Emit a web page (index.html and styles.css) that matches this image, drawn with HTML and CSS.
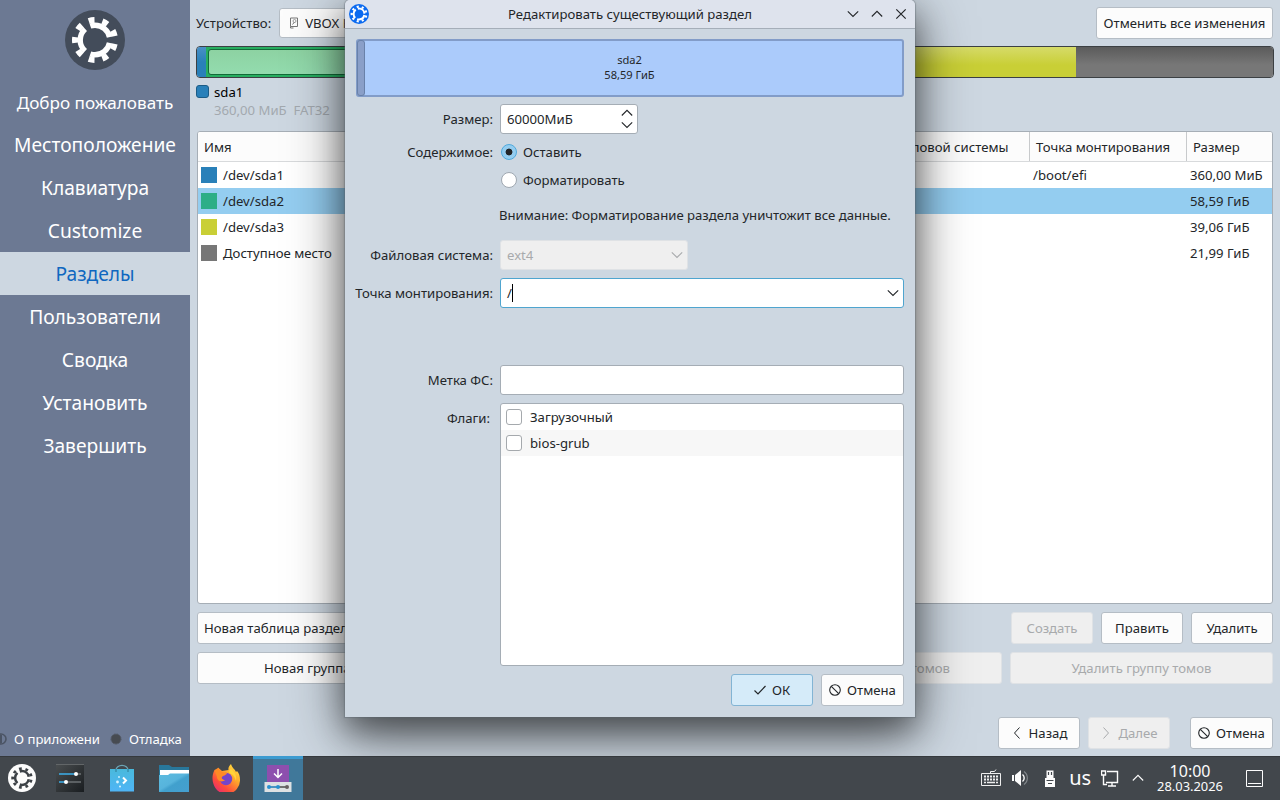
FILE: index.html
```html
<!DOCTYPE html>
<html lang="ru">
<head>
  <meta charset="UTF-8" />
  <title>Редактировать существующий раздел</title>
  <link rel="stylesheet" href="styles.css">
</head>
<body>
  <svg class="defs">
    <symbol id="gear" viewBox="-30 -30 60 60">
      <circle r="14.8" fill="none" stroke="currentColor" stroke-width="5.4" pathLength="36" stroke-dasharray="9.7 2.3" stroke-dashoffset="-1.15" />
      <circle r="20" fill="none" stroke="currentColor" stroke-width="6" pathLength="36" stroke-dasharray="1.7 2.3" stroke-dashoffset="-1.15" />
    </symbol>
    <symbol id="down" viewBox="0 0 12 12"><path d="M.8 3.3 6 8.5 11.2 3.3" fill="none" stroke="currentColor" stroke-width="1.1" /></symbol>
    <symbol id="up" viewBox="0 0 12 12"><path d="M.8 8.5 6 3.3 11.2 8.5" fill="none" stroke="currentColor" stroke-width="1.1" /></symbol>
    <symbol id="cancel" viewBox="0 0 12 12"><g fill="none" stroke="currentColor" stroke-width="1.1"><circle cx="6" cy="6" r="5.3" /><path d="M2.3 2.3 9.7 9.7" /></g></symbol>
  </svg>

  <div class="app">
    <aside class="sidebar">
      <div class="logo"><svg><use href="#gear" /></svg></div>
      <ul class="steps">
        <li class="small">Добро пожаловать</li>
        <li>Местоположение</li>
        <li>Клавиатура</li>
        <li>Customize</li>
        <li class="active">Разделы</li>
        <li>Пользователи</li>
        <li>Сводка</li>
        <li>Установить</li>
        <li>Завершить</li>
      </ul>
      <div class="about">
        <svg class="about-icon" viewBox="0 0 12 12"><circle cx="6" cy="6" r="5" fill="none" stroke="#4b5464" stroke-width="1.6" /><path d="M5.500 2v8" stroke="#4b5464" stroke-width="3" /></svg>
        <span>О приложени</span>
        <svg class="debug-icon" viewBox="0 0 12 12"><circle cx="6" cy="6" r="4.800" fill="#474b51" /><circle cx="6" cy="6" r="5" fill="none" stroke="#4b4f57" stroke-dasharray="1 .6" stroke-width="1" /></svg>
        <span>Отладка</span>
      </div>
    </aside>

    <main class="main">
      <div class="device">
        <span>Устройство:</span>
        <div class="combo">
          <svg class="disk" viewBox="0 0 10 12"><path d="M1.500 1h7v8.500h-7zM1.500 9.500v1.500h3M3.500 7.500l2-2.500" fill="none" stroke="#777" /><circle cx="5.500" cy="4" r="1.500" fill="none" stroke="#888" stroke-width=".8" /></svg>
          <span>VBOX HARDDISK</span>
        </div>
        <button class="revert">Отменить все изменения</button>
      </div>

      <div class="partbar">
        <div class="part p1"></div>
        <div class="part p2"><div class="inner"></div></div>
        <div class="part p3"></div>
        <div class="part p4"></div>
      </div>
      <div class="legend">
        <i></i>
        <div>
          <div class="legend-name">sda1</div>
          <div class="legend-size">360,00 МиБ&nbsp; FAT32</div>
        </div>
      </div>

      <div class="table">
        <div class="row head"><span>Имя</span><span>Файловая система</span><span>Метка файловой системы</span><span>Точка монтирования</span><span>Размер</span></div>
        <div class="row"><span><i class="c1"></i>/dev/sda1</span><span></span><span></span><span>/boot/efi</span><span>360,00 МиБ</span></div>
        <div class="row selected"><span><i class="c2"></i>/dev/sda2</span><span></span><span></span><span></span><span>58,59 ГиБ</span></div>
        <div class="row"><span><i class="c3"></i>/dev/sda3</span><span></span><span></span><span></span><span>39,06 ГиБ</span></div>
        <div class="row"><span><i class="c4"></i>Доступное место</span><span></span><span></span><span></span><span>21,99 ГиБ</span></div>
      </div>

      <div class="actions">
        <button class="new-table">Новая таблица разделов</button>
        <button class="fixed push" disabled>Создать</button>
        <button class="fixed">Править</button>
        <button class="fixed">Удалить</button>
      </div>
      <div class="volumes">
        <button>Новая группа томов</button>
        <button disabled>Изменить группу томов</button>
        <button disabled>Отключить группу томов</button>
        <button disabled>Удалить группу томов</button>
      </div>
      <div class="nav">
        <button class="fixed"><svg viewBox="0 0 12 12"><path d="M8.500.5 3.500 6l5 5.500" fill="none" stroke="currentColor" /></svg>Назад</button>
        <button class="fixed" disabled><svg viewBox="0 0 12 12"><path d="M3.500.5 8.500 6l-5 5.500" fill="none" stroke="currentColor" /></svg>Далее</button>
        <button class="cancel"><svg><use href="#cancel" /></svg>Отмена</button>
      </div>
    </main>
  </div>

  <div class="dialog">
    <div class="titlebar">
      <div class="title-icon"><svg><use href="#gear" /></svg></div>
      <div class="title">Редактировать существующий раздел</div>
      <svg><use href="#down" /></svg>
      <svg><use href="#up" /></svg>
      <svg viewBox="0 0 12 12"><path d="M1.300 1.300 10.700 10.700M10.700 1.300 1.300 10.700" stroke="currentColor" stroke-width="1.200" /></svg>
    </div>
    <div class="resizer">
      <div class="grip"></div>
      <div class="resizer-text">sda2<br>58,59 ГиБ</div>
    </div>
    <div class="form">
      <label>Размер:</label>
      <div class="field spin"><span>60000МиБ</span><div class="arrows"><svg><use href="#up" /></svg><svg><use href="#down" /></svg></div></div>
      <label>Содержимое:</label>
      <div class="radio"><i class="on"></i>Оставить</div>
      <span></span>
      <div class="radio"><i></i>Форматировать</div>
      <span></span>
      <div class="warning">Внимание: Форматирование раздела уничтожит все данные.</div>
      <label>Файловая система:</label>
      <div class="field disabled"><span>ext4</span><svg><use href="#down" /></svg></div>
      <label>Точка монтирования:</label>
      <div class="field focus"><span class="typed">/</span><svg><use href="#down" /></svg></div>
      <label class="fs-label">Метка ФС:</label>
      <div class="field fs-label"></div>
      <label class="flags-label">Флаги:</label>
      <div class="flags">
        <div><i></i>Загрузочный</div>
        <div><i></i>bios-grub</div>
      </div>
    </div>
    <div class="buttons">
      <button class="fixed ok"><svg viewBox="0 0 12 12"><path d="M.5 6.500 4 10 11.500 2" fill="none" stroke="currentColor" stroke-width="1.200" /></svg>ОК</button>
      <button class="cancel"><svg><use href="#cancel" /></svg>Отмена</button>
    </div>
  </div>

  <footer class="taskbar">
    <div class="task"><div class="launcher"><svg><use href="#gear" /></svg></div></div>
    <div class="task">
      <svg viewBox="0 0 28 28"><defs><linearGradient id="dark" x2="1" y2="1"><stop stop-color="#4a4e50" /><stop offset="1" stop-color="#191d20" /></linearGradient></defs><path fill="url(#dark)" d="M0 0h28v28H0z" /><path d="M0 .5h28" stroke="#626668" /><path d="M3 10h17M3 18h7" stroke="#3daee9" stroke-width="1.500" /><path d="M10 18h15M20 10h5" stroke="#6c7174" stroke-width="1.500" /><circle cx="20" cy="10" r="2" fill="#fff" /><circle cx="10" cy="18" r="2" fill="#fff" /></svg>
    </div>
    <div class="task">
      <svg viewBox="0 0 28 28"><defs><linearGradient id="bag" x2="0" y2="1"><stop stop-color="#49b9dc" /><stop offset="1" stop-color="#4fb5f6" /></linearGradient></defs><path d="M8 8V6a6 4.700 0 0 1 12 0v2" fill="none" stroke="#6ba5b5" stroke-width="1.300" /><path d="M2 5h24v22.500H2z" fill="url(#bag)" /><path d="M8 8V5M20 8V5" stroke="#3589a7" stroke-width="1.300" /><path d="m15 13.500 3 3-3 3" fill="none" stroke="#fff" stroke-width="2" /><g fill="#d8f3ff"><circle cx="11" cy="13" r=".9" /><circle cx="9.500" cy="18" r="1.400" /><circle cx="12" cy="22.500" r="1" /></g></svg>
    </div>
    <div class="task">
      <svg class="wide" viewBox="0 0 30 28"><defs><linearGradient id="fold" x2="1" y2="1"><stop stop-color="#5dbce0" /><stop offset=".45" stop-color="#57b4dc" /><stop offset=".55" stop-color="#41a0cd" /><stop offset="1" stop-color="#459fd0" /></linearGradient></defs><path d="M0 1h10l3 2h17v12H0z" fill="#28779b" /><path d="M1 6h29v8H1z" fill="#fff" /><path d="M0 11h9l2-1.500h19V28H0z" fill="url(#fold)" /></svg>
    </div>
    <div class="task">
      <svg viewBox="0 0 28 28"><defs><linearGradient id="fox" x1="1" x2=".2" y2="1"><stop stop-color="#fff04a" /><stop offset=".4" stop-color="#ffa92b" /><stop offset=".75" stop-color="#ff4c3b" /><stop offset="1" stop-color="#e62b75" /></linearGradient></defs><path d="M19 0c-2 2-3 4-2.500 6L10 7 6 3.500 5 7.500 2.500 6C0 11 0 16 1.500 20A13.500 13.500 0 0 0 28 16c0-4-1-7-3-9l-1 1C23 5 20 4 19 0z" fill="url(#fox)" /><circle cx="14" cy="15" r="6.200" fill="#7445c9" /><path d="M2.500 6 6 4l4 4 5 1c-1 3-4 2-5 4-1 1 1 3 3 3-3 3-8 1-8-3z" fill="#ff8a25" /><path d="M19 5c4 3 6 7 5 12-1-3-2-6-5-7-2-1-3-3 0-5z" fill="#ffd43a" /></svg>
    </div>
    <div class="task current">
      <svg viewBox="0 0 28 28"><path d="M3 1h22v18H3z" fill="#8d4fae" /><path d="M14 5v8M10 9.500l4 4 4-4" fill="none" stroke="#fff" stroke-width="1.500" /><path d="M.5 18h27v10H.5z" fill="#dde1e3" /><path d="M5 23h9" stroke="#2980b9" stroke-width="1.600" /><path d="M14 23h9" stroke="#555" stroke-width="1.600" /><circle cx="5" cy="23" r="2" fill="#2990d0" /><circle cx="14" cy="23" r="2" fill="#2990d0" /><circle cx="23" cy="23" r="2" fill="#665f60" /></svg>
    </div>
    <div class="tray">
      <svg class="t-key" viewBox="0 0 20 20"><g fill="none" stroke="#eee"><path d="M.5 5.500h19v12H.5zM9.500 5V3.500h4L15 1.500" /><path d="M3 8.500h14M3 11.500h14" stroke-width="2" stroke-dasharray="2 1" /><path d="M3 14.500h2M6 14.500h8M15 14.500h2" stroke-width="1.500" /></g></svg>
      <svg class="t-vol" viewBox="0 0 18 18"><path d="M1 6h2v6H1zM4 6l6-5v16l-6-5z" fill="#fcfcfc" /><path d="M11.500 5.500a4.500 4.500 0 0 1 0 7" fill="none" stroke="#fcfcfc" stroke-width="1.400" /><path d="M13 2.500a8 8 0 0 1 0 13" fill="none" stroke="#83888c" stroke-width="1.200" /></svg>
      <svg class="t-usb" viewBox="0 0 10 17"><path d="M1.500.5h7V8h-7zM0 8h10v9H0z" fill="#fcfcfc" /><path d="M3.500 2v3M6.500 2v3M3 13.500h4M1.500 10.500h7" fill="none" stroke="#42474c" stroke-width="1.200" /></svg>
      <span class="lang">us</span>
      <svg class="t-net" viewBox="0 0 18 17"><path d="M6 1.500h10.500v11H5M.5 1h4v4h-4zM2.500 5v9.500H6M11 13v3M7 16h8" fill="none" stroke="#fcfcfc" stroke-width="1.400" /></svg>
      <svg class="t-up"><use href="#up" /></svg>
      <div class="clock"><div>10:00</div><div class="date">28.03.2026</div></div>
      <svg class="t-desk" viewBox="0 0 17 17"><path d="M.5.5h16v16H.5zM2 13.500h13" fill="none" stroke="#fcfcfc" /></svg>
    </div>
  </footer>
</body>
</html>
```
FILE: styles.css
```css
* {
  box-sizing: border-box;
}
body {
  margin: 0;
  width: 1280px;
  height: 800px;
  overflow: hidden;
  position: relative;
  font: 13.15px/18px "Noto Sans", sans-serif;
  color: #232629;
  white-space: nowrap;
}
svg {
  width: 12px;
  height: 12px;
  flex: none;
}
.defs {
  position: absolute;
  width: 0;
  height: 0;
}
button {
  font: inherit;
  color: inherit;
  height: 32px;
  padding: 0 6px;
  background: #fcfcfc;
  border: 1px solid #b5bdc5;
  border-radius: 3px;
  display: flex;
  align-items: center;
  justify-content: center;
  gap: 6px;
}
button:disabled {
  background: #efefef;
  border-color: #dfe2e5;
  color: #a8aaac;
}
.fixed {
  width: 82px;
}
.cancel {
  width: 83px;
}

.app {
  display: flex;
  height: 756px;
}
.sidebar {
  width: 190px;
  background: #6c7993;
  color: #fff;
  display: flex;
  flex-direction: column;
  padding-top: 10px;
}
.logo {
  width: 60px;
  height: 60px;
  margin: 0 auto;
  border-radius: 50%;
  background: #434c5a;
}
.logo svg {
  width: 60px;
  height: 60px;
}
.steps {
  list-style: none;
  margin: 10px 0 0;
  padding: 0;
  text-align: center;
  font-size: 19.2px;
}
.steps li {
  height: 43px;
  line-height: 44px;
}
.steps .small {
  font-size: 17.1px;
  line-height: 45px;
}
.steps .active {
  background: #cdd7e1;
  color: #0f67c0;
}
.about {
  margin-top: auto;
  height: 34px;
  display: flex;
  align-items: center;
}
.about-icon {
  margin: 0 7px 0 -5px;
}
.debug-icon {
  margin: 0 7px 0 10px;
}

.main {
  flex: 1;
  min-width: 0;
  background: #cdd7e1;
  padding: 7px 7px 0;
}
.device {
  display: flex;
  align-items: center;
  height: 32px;
  margin-left: -1px;
}
.combo {
  margin-left: 8px;
  width: 300px;
  height: 30px;
  display: flex;
  align-items: center;
  background: #fcfcfc;
  border: 1px solid #b5bdc5;
  border-radius: 3px;
  padding-left: 9px;
  gap: 6px;
}
.disk {
  width: 10px;
}
.revert {
  margin-left: auto;
  width: 177px;
}
.partbar {
  display: flex;
  height: 32px;
  margin: 7px -1px 0;
  border: 1px solid #3c4043;
  border-radius: 4px;
  overflow: hidden;
}
.p1 {
  width: 9px;
  background: linear-gradient(#4a90c6, #2980b9 50%);
}
.p2 {
  width: 527px;
  background: #27ae60;
  padding: 2px;
}
.inner {
  height: 26px;
  border: 1px solid #126b38;
  border-radius: 3px;
  background: linear-gradient(#8dd2a2, #93dcae);
}
.p3 {
  width: 343px;
  background: linear-gradient(#d6db69, #c9cf36 60%);
}
.p4 {
  flex: 1;
  background: linear-gradient(#5b5b5b, #777 60%);
}
.legend {
  display: flex;
  margin: 5px 0 0 -1px;
  gap: 5px;
  height: 48px;
}
.legend i {
  width: 13px;
  height: 13px;
  margin-top: 2px;
  border: 1px solid #1c5c86;
  border-radius: 3px;
  background: #2980b9;
}
.legend-name {
  color: #000;
}
.legend-size {
  color: #a3a9af;
}
.table {
  height: 473px;
  background: #fff;
  border: 1px solid #a6aeb6;
  border-radius: 3px;
  overflow: hidden;
}
.row {
  display: grid;
  grid-template-columns: 320px 320px 192px 157px 1fr;
  height: 26px;
}
.row span {
  display: flex;
  align-items: center;
  padding-left: 3px;
}
.row i {
  width: 16px;
  height: 16px;
  margin-right: 6px;
}
.c1 { background: #2980b9; }
.c2 { background: #2dae87; }
.c3 { background: #c9cf36; }
.c4 { background: #777; }
.row.head {
  height: 30px;
  background: #fcfcfc;
  border-bottom: 1px solid #d8dadc;
}
.row.head span {
  padding-left: 6px;
  border-right: 1px solid #c8cacc;
}
.row.head span:last-child {
  border: 0;
}
.row.selected {
  background: #94cdf0;
}
.actions {
  display: flex;
  gap: 8px;
  margin-top: 8px;
}
.push {
  margin-left: auto;
}
.volumes {
  display: grid;
  grid-template-columns: repeat(4, 1fr);
  gap: 8px;
  margin-top: 8px;
}
.nav {
  display: flex;
  justify-content: flex-end;
  gap: 8px;
  margin-top: 33px;
}
.nav .cancel {
  margin-left: 12px;
}

.dialog {
  position: absolute;
  left: 345px;
  top: 0;
  width: 570px;
  height: 717px;
  background: #cdd7e1;
  border-radius: 5px 5px 0 0;
  box-shadow: 0 0 1px 1px rgba(90, 100, 110, .4), 0 14px 30px rgba(0, 0, 0, .35), 0 16px 56px rgba(0, 0, 0, .55);
}
.titlebar {
  height: 29px;
  display: flex;
  align-items: center;
  padding: 0 8px 0 4px;
  gap: 12px;
  background: #dee3ed;
  border-bottom: 1px solid #a5aeb9;
  border-radius: 5px 5px 0 0;
}
.title-icon {
  width: 20px;
  height: 20px;
  border-radius: 50%;
  background: #0b6af0;
  color: #fff;
}
.title-icon svg {
  display: block;
  width: 22px;
  height: 22px;
  margin: -1px;
}
.title {
  flex: 1;
  text-align: center;
  padding-left: 44px;
}
.resizer {
  display: flex;
  margin: 10px 11px 0;
  height: 58px;
  border: 2px solid #829cc8;
  border-radius: 3px;
  background: #abcbfb;
}
.grip {
  width: 8px;
  margin: -1px 0 -1px -1px;
  background: #8a9fc8;
  border: 1px solid #6981a9;
  border-radius: 3px;
}
.resizer-text {
  flex: 1;
  text-align: center;
  font-size: 11.1px;
  line-height: 15px;
  padding: 11px 8px 0 0;
}
.form {
  display: grid;
  grid-template-columns: 148px 404px;
  grid-template-rows: 30px 36px 20px 50px 30px 46px 87px 263px;
  column-gap: 7px;
  margin-top: 7px;
  align-items: center;
}
.form label {
  text-align: right;
}
.field {
  height: 30px;
  display: flex;
  align-items: center;
  justify-content: space-between;
  padding: 0 4px 0 6px;
  background: #fff;
  border: 1px solid #a5adb5;
  border-radius: 3px;
}
.spin {
  width: 138px;
}
.arrows {
  display: flex;
  flex-direction: column;
}
.arrows svg {
  display: block;
}
.radio {
  display: flex;
  align-items: center;
  gap: 6px;
}
.radio i {
  width: 16px;
  height: 16px;
  margin-left: 1px;
  border-radius: 50%;
  background: #fff;
  border: 1px solid #9fa8b1;
}
.radio .on {
  border-color: #4fa9dc;
  background: radial-gradient(circle, #232629 3px, #94cdf0 3.800px);
}
.warning {
  margin-left: -1px;
}
.field.disabled {
  width: 188px;
  background: #efefef;
  border-color: #dfe2e5;
  color: #a8aaac;
}
.field.focus {
  border-color: #4fa5cf;
}
.typed {
  border-right: 1px solid #000;
}
.form .fs-label {
  margin-top: 41px;
}
.form .flags-label {
  align-self: start;
  padding: 6px 3px 0 0;
}
.flags {
  height: 263px;
  background: #fff;
  border: 1px solid #a5adb5;
  border-radius: 3px;
}
.flags div {
  height: 26px;
  display: flex;
  align-items: center;
  padding-left: 5px;
  gap: 8px;
}
.flags div:nth-child(2) {
  background: #f7f7f7;
}
.flags i {
  width: 16px;
  height: 16px;
  border: 1px solid #a5a9ad;
  border-radius: 3px;
  background: #fff;
}
.buttons {
  display: flex;
  justify-content: flex-end;
  gap: 8px;
  padding: 8px 11px 0;
}
.buttons .ok {
  background: #d5ebf9;
  border-color: #82b4d4;
}

.taskbar {
  position: relative;
  height: 44px;
  display: flex;
  background: #42474c;
  border-top: 1px solid #35393d;
  color: #fcfcfc;
}
.task {
  width: 52px;
  display: flex;
  align-items: center;
  justify-content: center;
  padding-bottom: 1px;
}
.task:first-child {
  width: 44px;
}
.task svg {
  width: 28px;
  height: 28px;
}
.task .wide {
  width: 30px;
}
.launcher {
  width: 28px;
  height: 28px;
  border-radius: 50%;
  background: #fcfcfc;
  color: #3c4146;
}
.launcher svg {
  display: block;
}
.task.current {
  width: 50px;
  margin-left: 1px;
  margin-top: -1px;
  background: #40789a;
  border-top: 3px solid #3c9bd0;
  padding-bottom: 3px;
}
.tray {
  margin-left: auto;
  display: flex;
  align-items: center;
  padding: 0 17px 1px 0;
}
.t-key {
  width: 20px;
  height: 20px;
}
.t-vol {
  width: 18px;
  height: 18px;
  margin-left: 10px;
}
.t-usb {
  width: 10px;
  height: 17px;
  margin-left: 16px;
}
.lang {
  font-size: 20px;
  margin-left: 14px;
}
.t-net {
  width: 18px;
  height: 17px;
  margin-left: 10px;
}
.t-up {
  margin-left: 13px;
}
.clock {
  margin: 0 23px 0 13px;
  text-align: center;
  font-size: 16px;
  line-height: 15px;
  padding-top: 1px;
}
.date {
  font-size: 12.9px;
  line-height: 14px;
}
.t-desk {
  width: 17px;
  height: 17px;
}
```
